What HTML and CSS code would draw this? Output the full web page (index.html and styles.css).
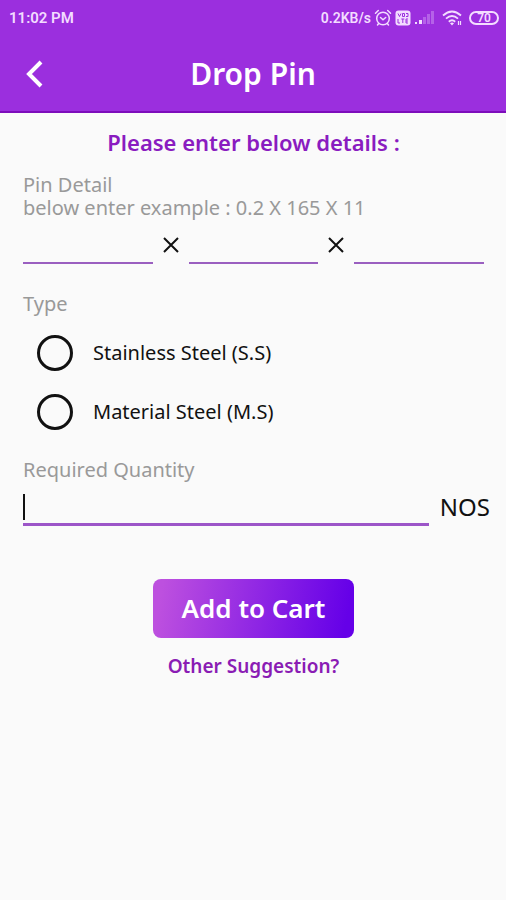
FILE: index.html
```html
<!DOCTYPE html>
<html lang="en">
<head>
<meta charset="utf-8">
<meta name="viewport" content="width=device-width, initial-scale=1">
<title>Drop Pin</title>
<link rel="stylesheet" href="styles.css">
</head>
<body>
<header class="top">
  <div class="status">
    <span class="time">11:02 PM</span>
    <div class="status-right">
      <span>0.2KB/s</span>
      <svg width="18" height="18" viewBox="0 0 18 18" fill="none" stroke="currentColor" stroke-width="1.5" stroke-linecap="round"><circle cx="9" cy="9.500" r="6.300"/><path d="M1.500 4.200 4.300 1.500M16.500 4.200 13.700 1.500M6.500 8.500 9 10.800 11.700 8.500M4.700 14.500 3.500 16M13.300 14.500 14.500 16"/></svg>
      <svg width="16" height="16" viewBox="0 0 16 16"><rect x=".5" y=".5" width="15" height="15" rx="3" fill="currentColor"/><path d="M3 3.500 4.500 6.500 6 3.500M7.500 3.500h2v3h-2zM11 3.500h2v3h-2M3 9v4h2M6.300 9h3M7.800 9v4M13 9h-2v4h2M11 11h2" fill="none" stroke="#9b2fde" stroke-width="1"/></svg>
      <svg width="20" height="16" viewBox="0 0 20 16" fill="currentColor"><path d="M1 12h2v2H1zM5 10h3v4H5z"/><path d="M9 7h3v7H9zM13 4h3v10h-3zM17 1h3v13h-3z" opacity=".3"/></svg>
      <svg class="wifi" width="20" height="16" viewBox="0 0 20 16" fill="none" stroke="currentColor" stroke-width="1.800"><path d="M1 5.500Q10-2.500 19 5.500M4 8.700Q10 3.300 16 8.700M6.800 11.700Q10 8.900 13.200 11.700"/><path d="M8 13.200Q10 11.700 12 13.200L10 15.500Z" fill="currentColor" stroke="none"/><path d="M16.500 11v4M18.500 11v4" stroke-width="1.200"/></svg>
      <span class="battery">70</span>
    </div>
  </div>
  <div class="bar">
    <button class="back" type="button" aria-label="Back"><svg width="20" height="28" viewBox="0 0 20 28" fill="none" stroke="currentColor" stroke-width="4"><path d="M17 2 5 14 17 26"/></svg></button>
    <h1>Drop Pin</h1>
  </div>
</header>
<main>
  <form>
    <h2>Please enter below details :</h2>
    <fieldset>
      <legend>Pin Detail<br>below enter example : 0.2 X 165 X 11</legend>
      <div class="sizes">
        <input class="line" type="text" aria-label="First dimension">
        <svg width="16" height="22" viewBox="0 0 16 22" fill="none" stroke="currentColor" stroke-width="2"><path d="M1 7 15 21M15 7 1 21"/></svg>
        <input class="line" type="text" aria-label="Second dimension">
        <svg width="16" height="22" viewBox="0 0 16 22" fill="none" stroke="currentColor" stroke-width="2"><path d="M1 7 15 21M15 7 1 21"/></svg>
        <input class="line" type="text" aria-label="Third dimension">
      </div>
    </fieldset>
    <fieldset class="types">
      <legend>Type</legend>
      <label class="option"><input type="radio" name="type" value="ss">Stainless Steel (S.S)</label>
      <label class="option"><input type="radio" name="type" value="ms">Material Steel (M.S)</label>
    </fieldset>
    <label class="caption" for="qty">Required Quantity</label>
    <div class="quantity">
      <div class="field"><input class="line active" id="qty" type="text"><span class="caret"></span></div>
      <span class="unit">NOS</span>
    </div>
    <button class="add" type="button">Add to Cart</button>
    <a class="other" href="#">Other Suggestion?</a>
  </form>
</main>
</body>
</html>
```
FILE: styles.css
```css
* {
  box-sizing: border-box;
}

body {
  margin: 0;
  min-height: 100vh;
  background: #fafafa;
  color: #111;
  font-family: "Noto Sans", sans-serif;
}

h1, h2, fieldset, legend {
  margin: 0;
  padding: 0;
  border: 0;
}

svg {
  display: block;
  flex: none;
}

.top {
  background: #9b2fde;
  border-bottom: 2px solid #7d0dbb;
  color: #fff;
}

.status {
  display: flex;
  justify-content: space-between;
  align-items: center;
  height: 36px;
  padding: 0 7px 0 9px;
  color: #f3dcff;
  font: 600 14px Roboto, sans-serif;
}

.time {
  font-size: 15px;
}

.status-right {
  display: flex;
  align-items: center;
  gap: 3px;
}

.wifi {
  margin-left: 5px;
}

.battery {
  width: 30px;
  margin-left: 4px;
  border: 2px solid;
  border-radius: 8px;
  font-size: 12px;
  line-height: 10px;
  text-align: center;
}

.bar {
  display: grid;
  grid-template-columns: 48px 1fr 48px;
  align-items: center;
  height: 75px;
}

.back {
  display: flex;
  padding: 0 0 0 24px;
  border: 0;
  background: none;
  color: inherit;
}

h1 {
  font-size: 30px;
  font-weight: 600;
  line-height: 40px;
  text-align: center;
}

form {
  display: flex;
  flex-direction: column;
  padding: 14px 22px 24px 23px;
}

h2 {
  margin-bottom: 16px;
  color: #8a1cc0;
  font-size: 22px;
  font-weight: 600;
  line-height: 30px;
  text-align: center;
}

legend, .caption {
  color: #999;
  font-size: 20px;
  line-height: 23px;
}

.sizes {
  display: flex;
  align-items: center;
  gap: 10px;
  height: 45px;
}

.line {
  display: block;
  flex: 1;
  width: 100%;
  min-width: 0;
  height: 45px;
  padding: 0;
  border: 0;
  border-bottom: 2px solid #9a5fc0;
  background: none;
  font: inherit;
  font-size: 22px;
  outline: 0;
}

.types {
  margin-top: 28px;
}

.option {
  display: flex;
  align-items: center;
  gap: 20px;
  height: 59px;
  padding-left: 14px;
  font-size: 20px;
}

.types legend {
  margin-bottom: 8px;
}

.option input {
  appearance: none;
  width: 36px;
  height: 36px;
  margin: 0;
  border: 3px solid #111;
  border-radius: 50%;
}

.option input:checked {
  background: radial-gradient(#8a1cc0 45%, transparent 50%);
}

.caption {
  margin-top: 17px;
}

.quantity {
  display: flex;
  align-items: center;
  gap: 11px;
  margin-right: -6px;
}

.field {
  position: relative;
  flex: 1;
}

.line.active {
  border-bottom: 3px solid #9c55c8;
}

.caret {
  position: absolute;
  left: 0;
  bottom: 6px;
  width: 2px;
  height: 26px;
  background: #111;
}

.unit {
  padding-top: 6px;
  font-size: 24px;
}

.add {
  align-self: center;
  margin-top: 53px;
  padding: 9px 29px;
  border: 0;
  border-radius: 8px;
  background: linear-gradient(100deg, #bd50df 5%, #6500e8 95%);
  color: #fff;
  font: 600 26px/41px "Noto Sans", sans-serif;
}

.other {
  align-self: center;
  margin-top: 14px;
  color: #8a1cb4;
  font-size: 19px;
  font-weight: 600;
  line-height: 28px;
  text-decoration: none;
}
```
